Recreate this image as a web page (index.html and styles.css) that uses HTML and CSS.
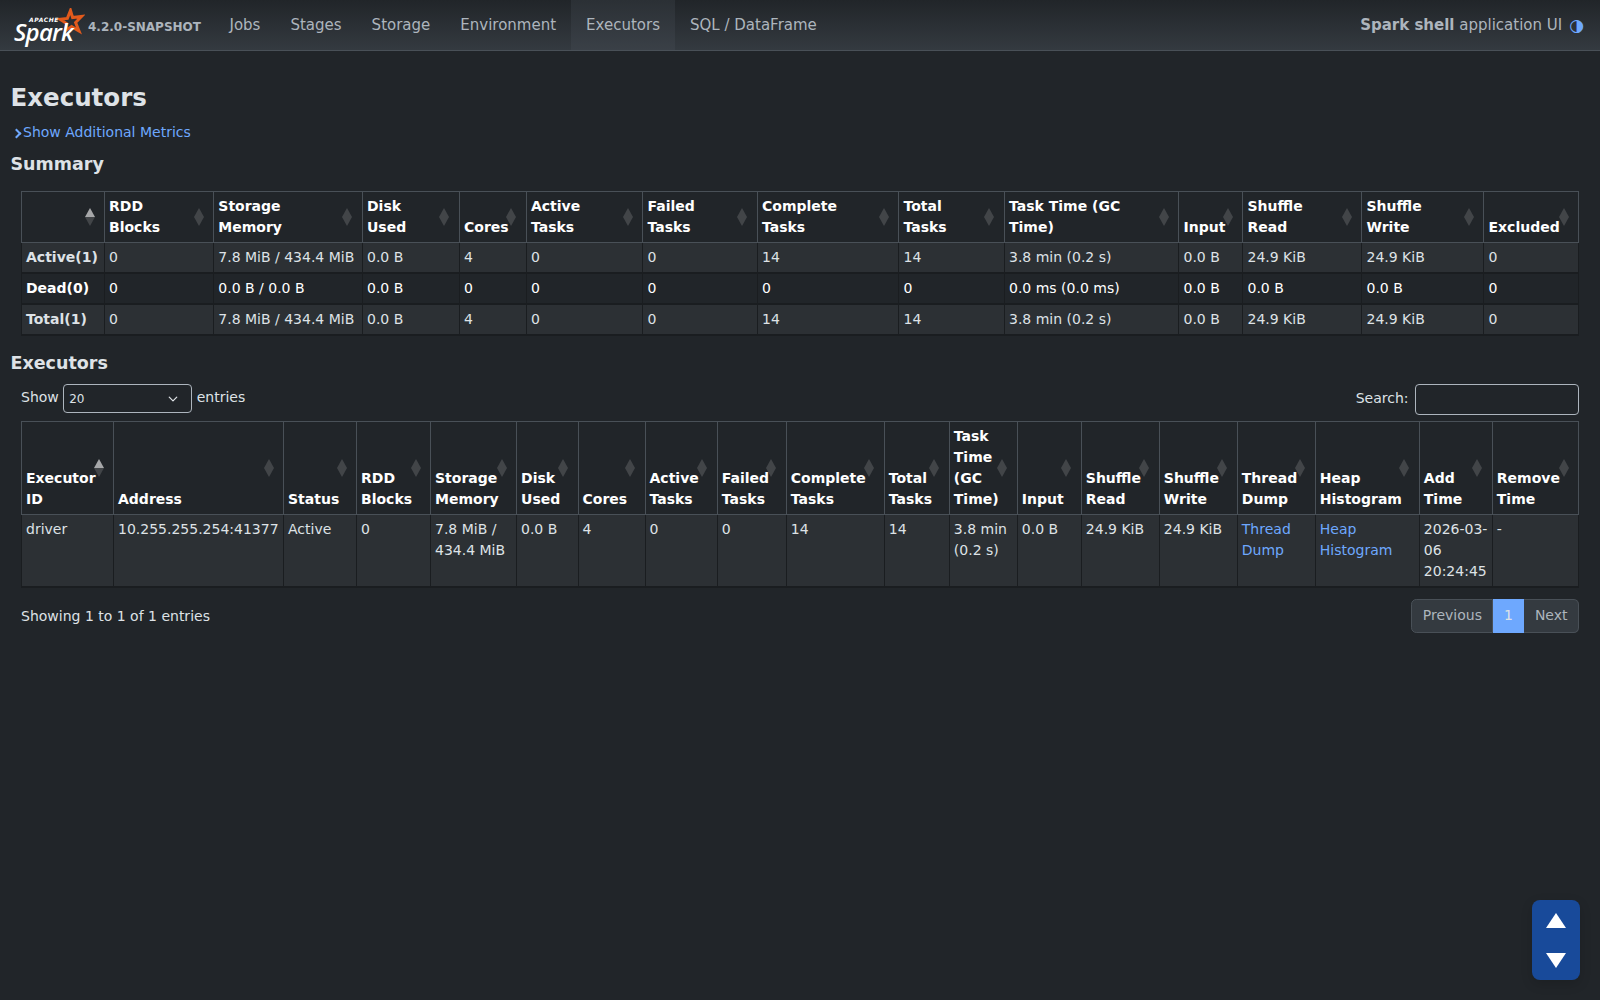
FILE: index.html
```html
<!DOCTYPE html>
<html lang="en" data-bs-theme="dark">
<head>
  <meta charset="UTF-8">
  <meta name="viewport" content="width=device-width, initial-scale=1.0">
  <title>Executors - Spark shell</title>
  <link rel="stylesheet" href="styles.css">
</head>
<body>
  <nav class="navbar">
    <a class="brand" href="#">
      <span class="logo">
        <svg class="logo-star" width="30" height="30" viewBox="0 0 30 30">
          <path d="M15.5 2.5 L17.6 9.6 L26.5 8.5 L20.6 14.5 L24 23 L16.6 18.6 L10.5 22.5 L11.6 15.6 L5 11.2 L12.4 10.4 Z" fill="none" stroke="#e25a1c" stroke-width="3" stroke-linejoin="miter"/>
        </svg>
        <span class="logo-apache">APACHE</span>
        <span class="logo-spark">Spark</span>
      </span>
      <span class="version">4.2.0-SNAPSHOT</span>
    </a>
    <ul class="nav-links">
      <li><a href="#">Jobs</a></li>
      <li><a href="#">Stages</a></li>
      <li><a href="#">Storage</a></li>
      <li><a href="#">Environment</a></li>
      <li class="active"><a href="#">Executors</a></li>
      <li><a href="#">SQL / DataFrame</a></li>
    </ul>
    <span class="app-title"><strong>Spark shell</strong> application UI</span>
    <button class="theme-toggle" type="button">◑</button>
  </nav>

  <main class="page">
    <h3 class="page-title">Executors</h3>
    <a class="metrics-toggle" href="#"><span class="arrow"></span>Show Additional Metrics</a>

    <h4 class="section-title">Summary</h4>
    <div class="table-wrap">
      <table class="data-table summary-table">
        <colgroup>
          <col><col><col><col><col><col><col><col><col><col><col><col><col><col>
        </colgroup>
        <thead>
          <tr>
            <th class="sort-asc"></th>
            <th>RDD Blocks</th>
            <th>Storage Memory</th>
            <th>Disk Used</th>
            <th>Cores</th>
            <th>Active Tasks</th>
            <th>Failed Tasks</th>
            <th>Complete Tasks</th>
            <th>Total Tasks</th>
            <th>Task Time (GC Time)</th>
            <th>Input</th>
            <th>Shuffle Read</th>
            <th>Shuffle Write</th>
            <th>Excluded</th>
          </tr>
        </thead>
        <tbody>
          <tr>
            <td><b>Active(1)</b></td><td>0</td><td>7.8 MiB / 434.4 MiB</td><td>0.0 B</td><td>4</td><td>0</td><td>0</td><td>14</td><td>14</td><td>3.8 min (0.2 s)</td><td>0.0 B</td><td>24.9 KiB</td><td>24.9 KiB</td><td>0</td>
          </tr>
          <tr>
            <td><b>Dead(0)</b></td><td>0</td><td>0.0 B / 0.0 B</td><td>0.0 B</td><td>0</td><td>0</td><td>0</td><td>0</td><td>0</td><td>0.0 ms (0.0 ms)</td><td>0.0 B</td><td>0.0 B</td><td>0.0 B</td><td>0</td>
          </tr>
          <tr>
            <td><b>Total(1)</b></td><td>0</td><td>7.8 MiB / 434.4 MiB</td><td>0.0 B</td><td>4</td><td>0</td><td>0</td><td>14</td><td>14</td><td>3.8 min (0.2 s)</td><td>0.0 B</td><td>24.9 KiB</td><td>24.9 KiB</td><td>0</td>
          </tr>
        </tbody>
      </table>
    </div>

    <h4 class="section-title executors-title">Executors</h4>
    <div class="table-wrap">
      <div class="table-controls">
        <label class="length-label">Show
          <select class="length-select">
            <option>20</option>
          </select>
          entries</label>
        <label class="search-label">Search: <input class="search-input" type="search"></label>
      </div>
      <table class="data-table executors-table">
        <colgroup>
          <col><col><col><col><col><col><col><col><col><col><col><col><col><col><col><col><col><col><col>
        </colgroup>
        <thead>
          <tr>
            <th class="sort-asc">Executor ID</th>
            <th>Address</th>
            <th>Status</th>
            <th>RDD Blocks</th>
            <th>Storage Memory</th>
            <th>Disk Used</th>
            <th>Cores</th>
            <th>Active Tasks</th>
            <th>Failed Tasks</th>
            <th>Complete Tasks</th>
            <th>Total Tasks</th>
            <th>Task Time (GC Time)</th>
            <th>Input</th>
            <th>Shuffle Read</th>
            <th>Shuffle Write</th>
            <th>Thread Dump</th>
            <th>Heap Histogram</th>
            <th>Add Time</th>
            <th>Remove Time</th>
          </tr>
        </thead>
        <tbody>
          <tr>
            <td>driver</td><td>10.255.255.254:41377</td><td>Active</td><td>0</td><td>7.8 MiB / 434.4 MiB</td><td>0.0 B</td><td>4</td><td>0</td><td>0</td><td>14</td><td>14</td><td>3.8 min (0.2 s)</td><td>0.0 B</td><td>24.9 KiB</td><td>24.9 KiB</td><td><a href="#">Thread Dump</a></td><td><a href="#">Heap Histogram</a></td><td>2026-03-06 20:24:45</td><td>-</td>
          </tr>
        </tbody>
      </table>
      <div class="table-footer">
        <span class="table-info">Showing 1 to 1 of 1 entries</span>
        <ul class="pagination">
          <li><a href="#">Previous</a></li>
          <li class="current"><a href="#">1</a></li>
          <li><a href="#">Next</a></li>
        </ul>
      </div>
    </div>
  </main>

  <div class="scroll-buttons">
    <span class="tri-up"></span>
    <span class="tri-down"></span>
  </div>
</body>
</html>
```

FILE: styles.css
```css
* {
  box-sizing: border-box;
}
body {
  margin: 0;
  min-height: 1000px;
  background: #212529;
  color: #dee2e6;
  font-family: "DejaVu Sans", sans-serif;
  font-size: 14px;
  line-height: 21px;
}
a {
  color: #6ea8fe;
  text-decoration: none;
}

/* top bar */
.navbar {
  display: flex;
  align-items: stretch;
  height: 51px;
  padding: 0 16px 0 14px;
  background: linear-gradient(to bottom, #212529, #343a40);
  border-bottom: 1px solid #495057;
}
.brand {
  display: flex;
  align-items: center;
  color: #adb5bd;
}
.logo {
  position: relative;
  display: block;
  width: 70px;
  height: 40px;
}
.logo-star {
  position: absolute;
  left: 41px;
  top: 3px;
}
.logo-apache {
  position: absolute;
  left: 15px;
  top: 11px;
  font-size: 6px;
  line-height: 8px;
  font-weight: 700;
  font-style: italic;
  letter-spacing: .6px;
  color: #fff;
}
.logo-spark {
  position: absolute;
  left: 0;
  top: 19px;
  font-family: "Open Sans", sans-serif;
  font-size: 24px;
  line-height: 16px;
  font-weight: 600;
  font-style: italic;
  letter-spacing: -.8px;
  color: #fff;
}
.version {
  margin: 5px 0 0 4px;
  font-size: 12px;
  font-weight: 700;
}
.nav-links {
  display: flex;
  list-style: none;
  margin: 0 0 0 13.5px;
  padding: 0;
  flex: 1;
}
.nav-links a {
  display: block;
  padding: 15px 15px 14px;
  font-size: 15px;
  color: #adb5bd;
}
.nav-links .active {
  background: linear-gradient(to bottom, #2b3035, #3a4047);
}
.app-title {
  align-self: center;
  font-size: 15px;
  color: #adb5bd;
}
.theme-toggle {
  align-self: center;
  margin-left: 7px;
  padding: 0;
  border: 0;
  background: none;
  font-family: "DejaVu Sans", sans-serif;
  font-size: 17px;
  line-height: 21px;
  color: #6ea8fe;
}

/* page content */
.page {
  padding: 0 21px 0 10.5px;
}
.page-title {
  margin: 30px 0 0;
  font-size: 24.5px;
  line-height: 34px;
  font-weight: 700;
}
.metrics-toggle {
  display: flex;
  align-items: center;
  margin: 7px 0 0 4px;
}
.arrow {
  width: 7px;
  height: 7px;
  margin: 2px 3px 0 -1.5px;
  border-top: 2.5px solid #6ea8fe;
  border-right: 2.5px solid #6ea8fe;
  transform: rotate(45deg);
}
.section-title {
  margin: 9px 0 0;
  font-size: 17.5px;
  line-height: 24px;
  font-weight: 700;
}
.executors-title {
  margin-top: 15px;
}
.table-wrap {
  margin-left: 10.5px;
}

/* tables */
.data-table {
  width: 100%;
  margin-top: 15px;
  table-layout: fixed;
  border-collapse: collapse;
  color: #fff;
  border-bottom: 2px solid #1a1d20;
}
.data-table th,
.data-table td {
  padding: 4px;
  border: 1px solid #1a1d20;
  border-bottom-width: 2px;
  vertical-align: top;
  text-align: left;
}
.data-table th {
  position: relative;
  padding-right: 26px;
  border: 1px solid #495057;
  vertical-align: bottom;
}
.data-table th::before,
.data-table th::after {
  content: "";
  position: absolute;
  right: 9.5px;
  border-left: 5px solid transparent;
  border-right: 5px solid transparent;
  opacity: .15;
}
.data-table th::before {
  bottom: 50%;
  border-bottom: 9px solid #fff;
}
.data-table th::after {
  top: 50%;
  border-top: 9px solid #fff;
}
.data-table th.sort-asc::before {
  opacity: .6;
}
.data-table tbody tr:nth-child(odd) td {
  background: #2c3034;
  color: #dee2e6;
}
.data-table tbody td a {
  color: #6ea8fe;
}

/* column widths read off the two tables */
.summary-table col:nth-child(1) { width: 83px; }
.summary-table col:nth-child(2) { width: 109.3px; }
.summary-table col:nth-child(3) { width: 148.7px; }
.summary-table col:nth-child(4) { width: 97px; }
.summary-table col:nth-child(5) { width: 67px; }
.summary-table col:nth-child(6) { width: 116.5px; }
.summary-table col:nth-child(7) { width: 114.5px; }
.summary-table col:nth-child(8) { width: 141.5px; }
.summary-table col:nth-child(9) { width: 105.5px; }
.summary-table col:nth-child(10) { width: 174.5px; }
.summary-table col:nth-child(11) { width: 64px; }
.summary-table col:nth-child(12) { width: 119px; }
.summary-table col:nth-child(13) { width: 122px; }
.summary-table col:nth-child(14) { width: 95px; }

.executors-table col:nth-child(1) { width: 92px; }
.executors-table col:nth-child(2) { width: 170px; }
.executors-table col:nth-child(3) { width: 73px; }
.executors-table col:nth-child(4) { width: 74px; }
.executors-table col:nth-child(5) { width: 86px; }
.executors-table col:nth-child(6) { width: 61.5px; }
.executors-table col:nth-child(7) { width: 67px; }
.executors-table col:nth-child(8) { width: 72.3px; }
.executors-table col:nth-child(9) { width: 69px; }
.executors-table col:nth-child(10) { width: 98px; }
.executors-table col:nth-child(11) { width: 65px; }
.executors-table col:nth-child(12) { width: 68px; }
.executors-table col:nth-child(13) { width: 64px; }
.executors-table col:nth-child(14) { width: 78px; }
.executors-table col:nth-child(15) { width: 78px; }
.executors-table col:nth-child(16) { width: 78px; }
.executors-table col:nth-child(17) { width: 104px; }
.executors-table col:nth-child(18) { width: 73px; }
.executors-table col:nth-child(19) { width: 86px; }

/* length select, search */
.table-controls {
  display: flex;
  justify-content: space-between;
  align-items: flex-start;
  margin-top: 9px;
}
.table-controls + .data-table {
  margin-top: 6px;
}
.length-label {
  line-height: 18px;
}
.length-select {
  appearance: none;
  width: 129px;
  height: 29px;
  margin: 0;
  padding: 0 8px 0 5px;
  border: 1px solid #adb5bd;
  border-radius: 4px;
  background: #212529 url("data:image/svg+xml,%3csvg xmlns='http://www.w3.org/2000/svg' viewBox='0 0 16 16'%3e%3cpath fill='none' stroke='%23dee2e6' stroke-linecap='round' stroke-linejoin='round' stroke-width='2' d='m2 5 6 6 6-6'/%3e%3c/svg%3e") no-repeat right 12px center / 12px 10px;
  color: #dee2e6;
  font-family: "DejaVu Sans", sans-serif;
  font-size: 12px;
  vertical-align: -1px;
}
.search-label {
  display: flex;
  align-items: flex-start;
  line-height: 29px;
}
.search-input {
  width: 164px;
  height: 31px;
  margin-left: 6.5px;
  border: 1px solid #adb5bd;
  border-radius: 4px;
  background: #212529;
}

/* footer under executors table */
.table-footer {
  display: flex;
  justify-content: space-between;
  align-items: center;
  margin-top: 11px;
}
.table-info {
  padding-top: 2px;
}
.pagination {
  display: flex;
  list-style: none;
  margin: 0;
  padding: 0;
}
.pagination a {
  display: block;
  padding: 5.25px 10.5px;
  border: 1px solid #495057;
  border-left: 0;
  background: #343a40;
  color: #adb5bd;
}
.pagination li:first-child a {
  border-left: 1px solid #495057;
  border-radius: 5.25px 0 0 5.25px;
}
.pagination li:last-child a {
  border-radius: 0 5.25px 5.25px 0;
}
.pagination .current a {
  background: #6ea8fe;
  border-color: #6ea8fe;
  color: #dee2e6;
}

/* floating scroll buttons */
.scroll-buttons {
  position: fixed;
  right: 20px;
  bottom: 20px;
  display: flex;
  flex-direction: column;
  align-items: center;
  gap: 25px;
  width: 48px;
  height: 80px;
  padding-top: 13px;
  border-radius: 8px;
  background: #184a9a;
  box-shadow: 0 4px 12px rgba(0, 0, 0, .15);
}
.tri-up {
  width: 0;
  height: 0;
  border-left: 10px solid transparent;
  border-right: 10px solid transparent;
  border-bottom: 15px solid #fff;
}
.tri-down {
  width: 0;
  height: 0;
  border-left: 10px solid transparent;
  border-right: 10px solid transparent;
  border-top: 15px solid #fff;
}
```
